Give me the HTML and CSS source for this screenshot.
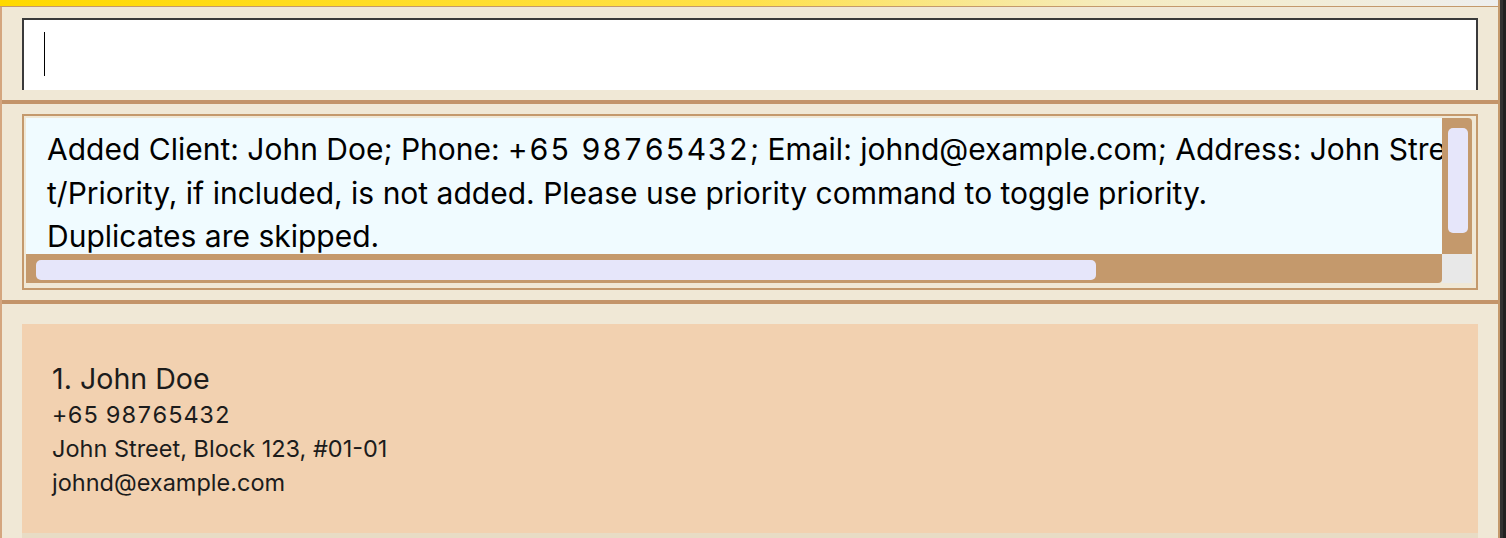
FILE: index.html
```html
<!DOCTYPE html>
<html>
<head>
<meta charset="utf-8">
<link rel="stylesheet" href="styles.css">
</head>
<body>
<div class="window">
  <div class="topbar"></div>
  <div class="main">
    <div class="command-area">
      <div class="command-box"><span class="caret"></span></div>
    </div>
    <div class="separator"></div>
    <div class="result-area">
      <div class="result-frame">
        <div class="scroll-pane">
          <div class="viewport">
            <div class="result-text">Added Client: John Doe; Phone: <span class="num">+65 98765432</span>; Email: johnd@example.com; Address: John Street, Block 123, #01-01
t/Priority, if included, is not added. Please use priority command to toggle priority.
Duplicates are skipped.</div>
          </div>
          <div class="vbar"><div class="vthumb"></div></div>
          <div class="hbar"><div class="hthumb"></div></div>
          <div class="corner"></div>
        </div>
      </div>
    </div>
    <div class="separator"></div>
    <div class="list-area">
      <div class="card">
        <div class="name">1. John Doe</div>
        <div class="field phone">+65 98765432</div>
        <div class="field">John Street, Block 123, #01-01</div>
        <div class="field">johnd@example.com</div>
      </div>
      <div class="next-cell"></div>
    </div>
  </div>
</div>
</body>
</html>
```

FILE: styles.css
```css
* { box-sizing: border-box; }
html, body { margin: 0; padding: 0; }
body {
  width: 1506px;
  height: 538px;
  overflow: hidden;
  background: #222;
  font-family: Inter, "Noto Sans", sans-serif;
}
.window {
  width: 1500px;
  height: 538px;
  display: flex;
  flex-direction: column;
  background: #f0e8d6;
  border-right: 2px solid #c4996c;
  box-shadow: 3px 0 0 #333;
}
.topbar {
  height: 7px;
  flex: none;
  background: linear-gradient(to right, #ffd900 0%, #ffe14a 50%, #f5ecc2 75%, #eeeeee 100%);
  border-bottom: 1px solid #c4996c;
}
.main {
  flex: 1;
  border-left: 2px solid #d4a67f;
  display: flex;
  flex-direction: column;
  min-height: 0;
}
.command-area {
  padding: 11px 20px 10px 20px;
}
.command-box {
  height: 72px;
  background: #fff;
  border: 2px solid #3a3a3a;
  border-bottom: none;
  padding: 12px 0 0 20px;
}
.caret {
  display: block;
  width: 1px;
  height: 44px;
  background: #000;
}
.separator {
  height: 4px;
  flex: none;
  background: #c3946a;
}
.result-area {
  padding: 10px 20px 10px 20px;
}
.result-frame {
  height: 176px;
  border: 2px solid #c4996c;
  padding: 2px 4px 5px 2px;
}
.scroll-pane {
  height: 165px;
  display: grid;
  grid-template-columns: 1fr 30px;
  grid-template-rows: 136px 29px;
}
.viewport {
  background: #f0fbff;
  overflow: hidden;
  padding: 10px 0 0 21px;
}
.result-text {
  white-space: pre;
  font-size: 30px;
  line-height: 43.5px;
  color: #000;
}
.num {
  font-variant-numeric: tabular-nums;
  letter-spacing: 0.055em;
}
.vbar {
  background: #c4996c;
  border-top-right-radius: 4px;
  padding: 10px 4px 0 6px;
}
.vthumb {
  height: 105px;
  background: #e6e6fa;
  border-radius: 5px;
}
.hbar {
  background: #c4996c;
  border-bottom-right-radius: 4px;
  padding: 6px 0 0 10px;
}
.hthumb {
  width: 1060px;
  height: 20px;
  background: #e6e6fa;
  border-radius: 5px;
}
.corner {
  background: #e8e8e8;
}
.list-area {
  flex: 1;
  padding: 20px 20px 0 20px;
  display: flex;
  flex-direction: column;
}
.card {
  height: 209px;
  flex: none;
  background: #f2d1b0;
  padding: 36px 30px 0 30px;
  color: #1c1c1c;
}
.name {
  font-size: 28.6px;
  line-height: 38px;
}
.field {
  font-size: 23.5px;
  line-height: 34px;
}
.phone {
  font-variant-numeric: tabular-nums;
  letter-spacing: 0.016em;
}
.next-cell {
  flex: 1;
  background: #e8dcc5;
}
```
